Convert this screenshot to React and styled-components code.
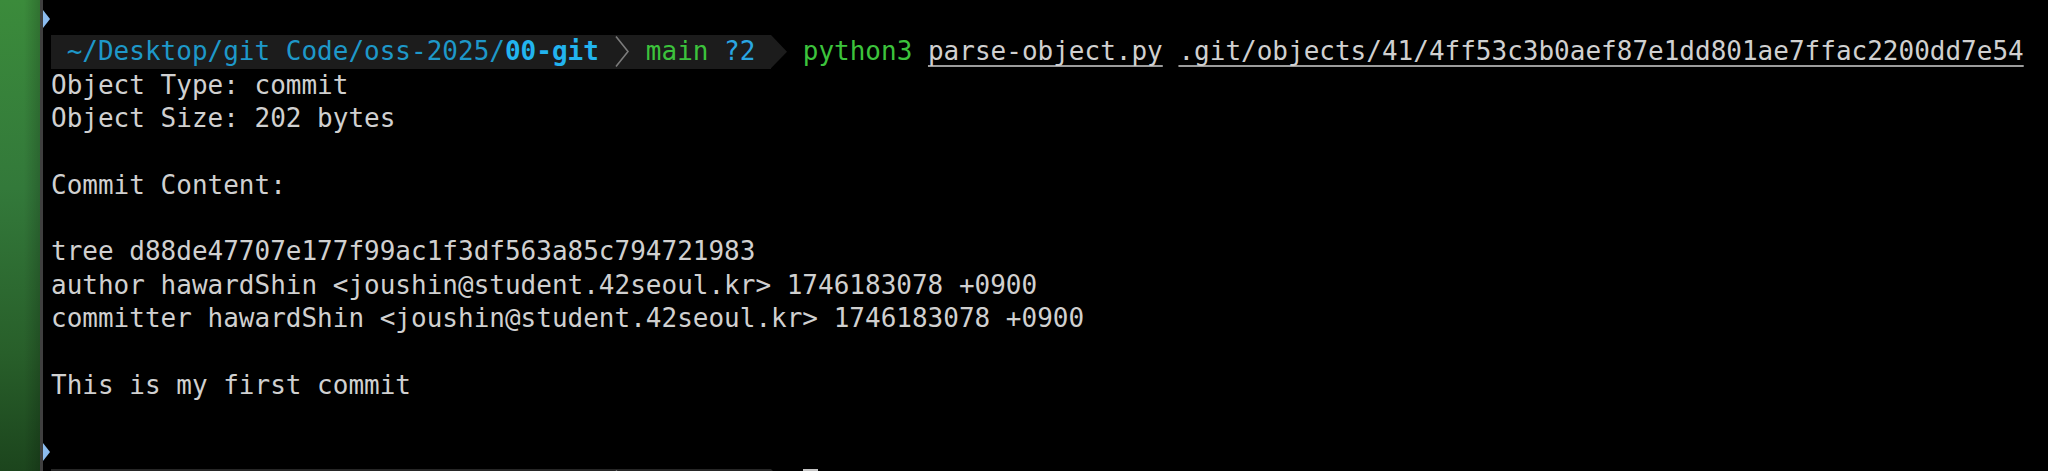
import React from 'react';
import styled, { createGlobalStyle } from 'styled-components';

const GlobalStyle = createGlobalStyle`
  html, body {
    margin: 0;
    padding: 0;
    background: #000000;
    overflow: hidden;
  }
`;

const ROW = 33.33;
const COL = 15.65;

const Page = styled.div`
  display: flex;
  width: 2048px;
  height: 471px;
  overflow: hidden;
  background: #000000;
`;

const Desktop = styled.div`
  width: 40px;
  flex-shrink: 0;
  background:
    linear-gradient(90deg, rgba(0, 0, 0, 0) 60%, rgba(0, 0, 0, 0.18) 100%),
    linear-gradient(180deg, #3b8b3b 0%, #33793a 40%, #285f2a 75%, #1c451d 100%);
`;

const Terminal = styled.div`
  flex: 1;
  border-left: 3px solid #3f3f3f;
  padding-top: 2px;
  font-family: "DejaVu Sans Mono", "Liberation Mono", monospace;
  font-size: 26px;
  color: #d0d0d0;
  overflow: hidden;
`;

const Line = styled.div`
  display: flex;
  align-items: stretch;
  height: ${ROW}px;
  line-height: ${ROW}px;
  white-space: pre;
`;

const Gutter = styled.div`
  width: 8px;
  flex-shrink: 0;
  display: flex;
  align-items: center;
`;

const Mark = styled.div`
  width: 0;
  height: 0;
  border-top: 9.5px solid transparent;
  border-bottom: 9.5px solid transparent;
  border-left: 7px solid #8cbcef;
`;

const Bar = styled.div`
  display: flex;
  align-items: stretch;
  background: ${(p) => p.$bg || '#1c1c1c'};
`;

const Seg = styled.span`
  color: ${(p) => p.$color || '#d0d0d0'};
  font-weight: ${(p) => (p.$bold ? 700 : 400)};
  text-decoration: ${(p) => (p.$under ? 'underline' : 'none')};
  text-decoration-color: #9c9c9c;
  text-decoration-thickness: 2px;
  text-underline-offset: 5px;
`;

const Gap = styled.span`
  display: inline-block;
  width: ${(p) => p.$cols * COL}px;
`;

const Cell = styled.span`
  display: inline-flex;
  align-items: center;
  justify-content: center;
  width: ${COL}px;
`;

const Cursor = styled.span`
  display: inline-block;
  width: ${COL}px;
  background: #c4c4c4;
`;

const Thin = () => (
  <Cell>
    <svg width="14" height="33" viewBox="0 0 14 33">
      <path d="M1 1.5 L13 16.5 L1 31.5" fill="none" stroke="#7b7b7b" strokeWidth="1.6" />
    </svg>
  </Cell>
);

const Arrow = ({ color }) => (
  <svg width="16" height={ROW} viewBox="0 0 16 33.33" style={{ display: 'block' }}>
    <path d="M0 0 L16 16.66 L0 33.33 Z" fill={color} />
  </svg>
);

const Prompt = () => (
  <>
    <Bar>
      <Seg $color="#1e98c9"> ~/Desktop/git Code/oss-2025/</Seg>
      <Seg $color="#22b4ef" $bold>00-git</Seg>
      <Seg> </Seg>
      <Thin />
      <Seg> </Seg>
      <Seg $color="#3cc33c">main </Seg>
      <Seg $color="#2aa6e2">?2</Seg>
      <Seg> </Seg>
    </Bar>
    <Arrow color="#1c1c1c" />
  </>
);

// next prompt, only its top edge shows below the window
const NextPrompt = () => (
  <>
    <Bar $bg="#262626">
      <Gap $cols={36} />
      <Thin />
      <Gap $cols={9} />
    </Bar>
    <Arrow color="#262626" />
  </>
);

const output = [
  'Object Type: commit',
  'Object Size: 202 bytes',
  '',
  'Commit Content:',
  '',
  'tree d88de47707e177f99ac1f3df563a85c794721983',
  'author hawardShin <joushin@student.42seoul.kr> 1746183078 +0900',
  'committer hawardShin <joushin@student.42seoul.kr> 1746183078 +0900',
  '',
  'This is my first commit',
  '',
];

export default function App() {
  return (
    <>
      <GlobalStyle />
      <Page>
        <Desktop />
        <Terminal>
          <Line>
            <Gutter><Mark /></Gutter>
          </Line>
          <Line>
            <Gutter />
            <Prompt />
            <Seg> </Seg>
            <Seg $color="#3cc33c">python3</Seg>
            <Seg> </Seg>
            <Seg $under>parse-object.py</Seg>
            <Seg> </Seg>
            <Seg $under>.git/objects/41/4ff53c3b0aef87e1dd801ae7ffac2200dd7e54</Seg>
          </Line>
          {output.map((text, i) => (
            <Line key={i}>
              <Gutter />
              <Seg>{text}</Seg>
            </Line>
          ))}
          <Line>
            <Gutter><Mark /></Gutter>
          </Line>
          <Line>
            <Gutter />
            <NextPrompt />
            <Gap $cols={1} />
            <Cursor />
          </Line>
        </Terminal>
      </Page>
    </>
  );
}
